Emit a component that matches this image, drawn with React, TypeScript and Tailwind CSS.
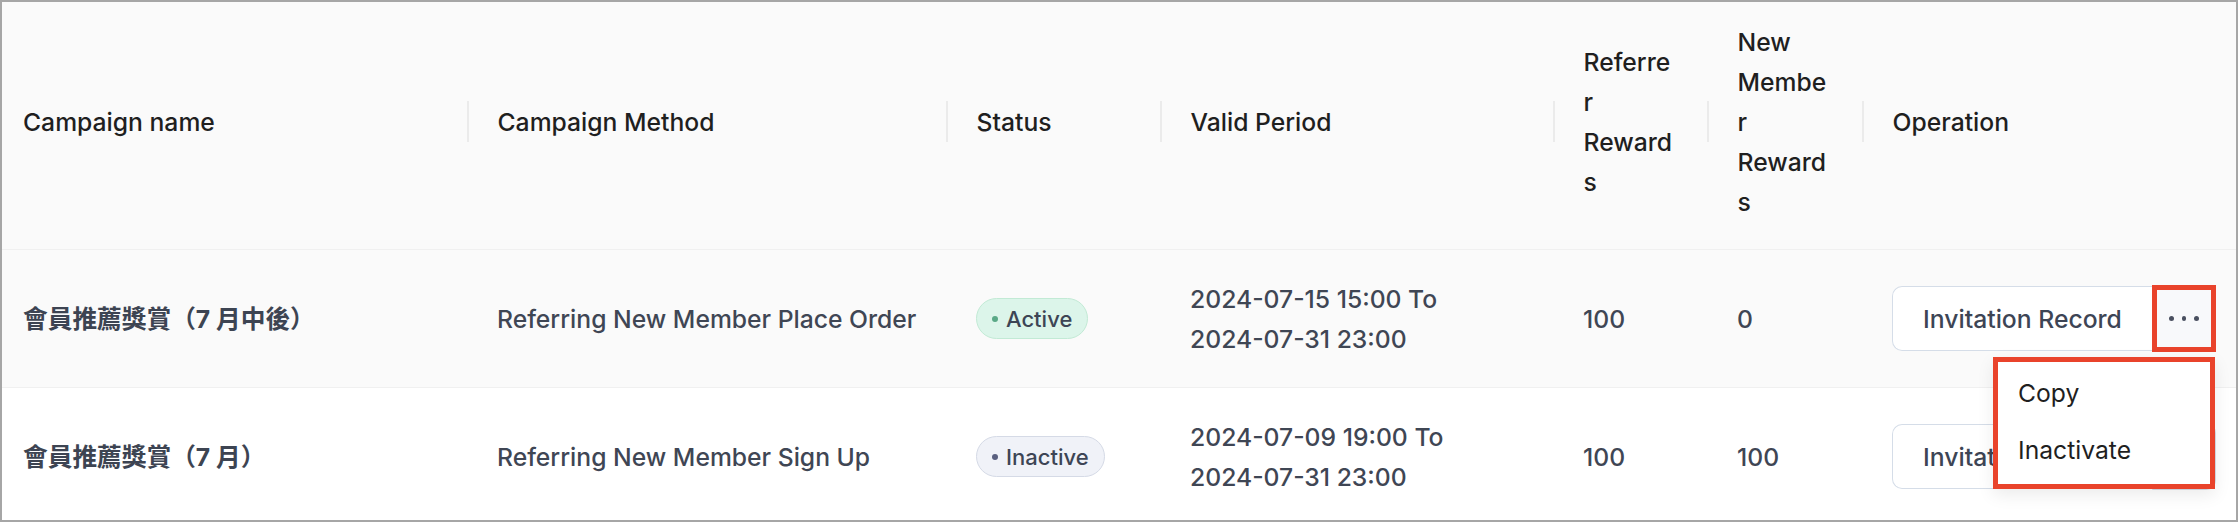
type Campaign = {
  name: string;
  method: string;
  active: boolean;
  from: string;
  to: string;
  referrer: number;
  member: number;
};

const campaigns: Campaign[] = [
  {
    name: '會員推薦獎賞（7 月中後）',
    method: 'Referring New Member Place Order',
    active: true,
    from: '2024-07-15 15:00',
    to: '2024-07-31 23:00',
    referrer: 100,
    member: 0,
  },
  {
    name: '會員推薦獎賞（7 月）',
    method: 'Referring New Member Sign Up',
    active: false,
    from: '2024-07-09 19:00',
    to: '2024-07-31 23:00',
    referrer: 100,
    member: 100,
  },
];

const cols = 'grid grid-cols-[465px_479px_214px_393px_154px_155px_1fr]';

/** Celda de cabecera con el separador vertical a la izquierda. */
function HeadCell({ children, first = false }: { children: React.ReactNode; first?: boolean }) {
  return (
    <div className="flex items-center">
      {first ? null : <span className="h-[41px] w-[1.5px] shrink-0 bg-[#ebebeb]" />}
      <div className={first ? 'pl-[21px]' : 'pl-[29px]'}>{children}</div>
    </div>
  );
}

function StatusBadge({ active }: { active: boolean }) {
  return active ? (
    <span className="inline-flex h-[41px] items-center gap-[8px] rounded-full border-[1.5px] border-[#c2ead5] bg-[#dcf5ea] pl-[15px] pr-[15px] text-[22px] font-medium text-[#3d4555]">
      <span className="h-[6px] w-[6px] rounded-full bg-[#5aa987]" />
      Active
    </span>
  ) : (
    <span className="inline-flex h-[41px] items-center gap-[8px] rounded-full border-[1.5px] border-[#d5dae6] bg-[#f0f2f8] pl-[15px] pr-[15px] text-[22px] font-medium text-[#3d4555]">
      <span className="h-[6px] w-[6px] rounded-full bg-[#5a6080]" />
      Inactive
    </span>
  );
}

function Operation({ open }: { open: boolean }) {
  return (
    <div className="relative flex">
      <button
        type="button"
        className="h-[65px] w-[260px] rounded-l-[10px] border-[1.5px] border-r-0 border-[#d5dde8] bg-white text-[24.7px] font-medium text-[#3d4555]"
      >
        Invitation Record
      </button>
      <button
        type="button"
        aria-label="More"
        className={`-my-px flex h-[67px] w-[64px] items-center justify-center gap-[8px] bg-[#f8f9fb] ${
          open ? 'border-[5px] border-[#e9432b]' : 'rounded-r-[10px] border-[1.5px] border-[#d5dde8]'
        }`}
      >
        <span className="h-[4.5px] w-[4.5px] rounded-full bg-[#4a5060]" />
        <span className="h-[4.5px] w-[4.5px] rounded-full bg-[#4a5060]" />
        <span className="h-[4.5px] w-[4.5px] rounded-full bg-[#4a5060]" />
      </button>

      {/* Menú desplegado, marcado en rojo. */}
      {open && (
        <div className="absolute right-[1px] top-[71px] z-10 w-[222px] border-[5px] border-[#e9432b] bg-white pb-[6px] pt-[2px] font-normal shadow-[0_6px_16px_rgba(0,0,0,0.08)]">
          <div className="flex h-[57px] items-center pl-[20px] text-[24.7px] text-[#1f1f1f]">Copy</div>
          <div className="flex h-[57px] items-center pl-[20px] text-[24.7px] text-[#1f1f1f]">Inactivate</div>
        </div>
      )}
    </div>
  );
}

export default function App() {
  return (
    <div className="h-[522px] w-[2238px] overflow-hidden border-2 border-[#a6a6a6] bg-white font-['Inter','Noto_Sans_CJK_TC',sans-serif]">
      <div className={`${cols} h-[248px] border-b border-[#f0f0f0] bg-[#fafafa] pb-[8px] text-[24.7px] font-medium leading-[40px] text-[#1f1f1f]`}>
        <HeadCell first>Campaign name</HeadCell>
        <HeadCell>Campaign Method</HeadCell>
        <HeadCell>Status</HeadCell>
        <HeadCell>Valid Period</HeadCell>
        <HeadCell>
          Referre
          <br />r<br />
          Reward
          <br />s
        </HeadCell>
        <HeadCell>
          New
          <br />
          Membe
          <br />r<br />
          Reward
          <br />s
        </HeadCell>
        <HeadCell>Operation</HeadCell>
      </div>

      {campaigns.map((c, i) => (
        <div
          key={c.name}
          className={`${cols} h-[138px] border-b border-[#f0f0f0] text-[24.7px] font-medium leading-[40px] text-[#3f4654] ${
            i === 0 ? 'bg-[#fafafa]' : 'bg-white'
          }`}
        >
          <div className="flex items-center pl-[21px] font-bold text-[#3d4452]">{c.name}</div>
          <div className="flex items-center pl-[30px]">{c.method}</div>
          <div className="flex items-center pl-[30px]">
            <StatusBadge active={c.active} />
          </div>
          <div className="flex flex-col justify-center pl-[30px]">
            <span>{c.from} To</span>
            <span>{c.to}</span>
          </div>
          <div className="flex items-center pl-[30px]">{c.referrer}</div>
          <div className="flex items-center pl-[30px]">{c.member}</div>
          <div className="flex items-center pl-[30px]">
            <Operation open={i === 0} />
          </div>
        </div>
      ))}
    </div>
  );
}
